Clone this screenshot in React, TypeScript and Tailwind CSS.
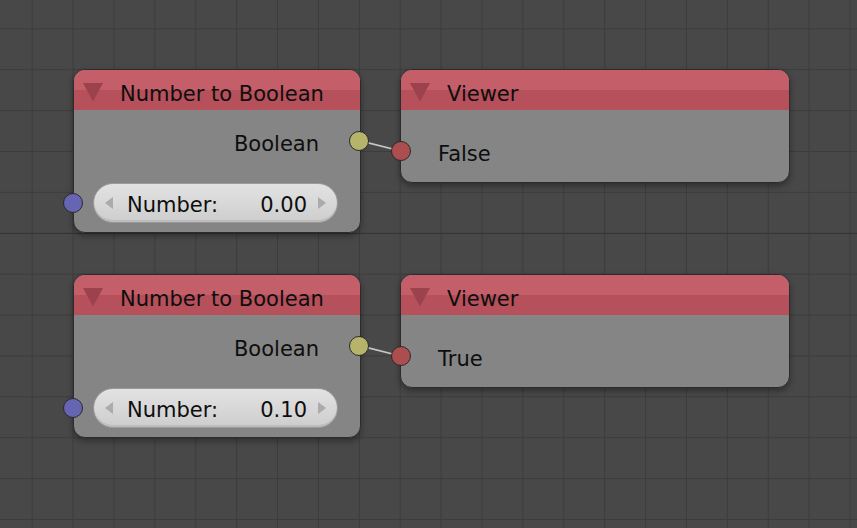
/**
 * Node editor canvas -- two "Number to Boolean" nodes wired to Viewer nodes.
 */

const FONT = "font-['DejaVu_Sans','Liberation_Sans',sans-serif]";

function Collapse() {
  return (
    <svg width="20" height="19" viewBox="0 0 20 19" className="mt-[1px] shrink-0">
      <polygon points="0,0 20,0 10,18.5" fill="#9c424d" />
    </svg>
  );
}

function Socket({ className }: { className: string }) {
  return (
    <div
      className={`absolute z-20 h-[20px] w-[20px] rounded-full border border-[#2a2a2a] ${className}`}
    />
  );
}

function Header({ title }: { title: string }) {
  return (
    <div className="flex h-[40px] items-start gap-[17px] rounded-t-[11px] bg-[linear-gradient(to_bottom,#c45e69_0%,#c45e69_50%,#b6505b_50%,#b6505b_100%)] pl-[9px] pt-[12px]">
      <Collapse />
      <span className="text-[21px] leading-[24px] text-[#0e0e0e]">{title}</span>
    </div>
  );
}

function NumberToBoolean({ value }: { value: string }) {
  return (
    <div className="relative h-[164px] w-[288px] shrink-0 rounded-[12px] border border-[#2c2c2c] bg-[#858585] shadow-[0_3px_6px_rgba(0,0,0,0.35)]">
      <Header title="Number to Boolean" />
      <div className="pr-[41px] pt-[22px] text-right text-[21px] leading-[24px] text-[#0e0e0e]">
        Boolean
      </div>
      <div className="ml-[19px] mt-[27px] flex h-[40px] w-[245px] items-center rounded-full border border-[#9a9a9a] bg-[linear-gradient(to_bottom,#e2e2e2,#d6d6d6_60%,#cdcdcd)] px-[11px] shadow-[inset_0_-2px_0_rgba(0,0,0,0.08)]">
        <svg width="8" height="12" viewBox="0 0 8 12" className="shrink-0">
          <polygon points="8,0 8,12 0,6" fill="#ababab" />
        </svg>
        <span className="ml-[14px] mt-[4px] text-[21px] leading-[24px] text-[#0e0e0e]">Number:</span>
        <span className="ml-auto mt-[4px] text-[21px] leading-[24px] text-[#0e0e0e]">{value}</span>
        <svg width="8" height="12" viewBox="0 0 8 12" className="ml-[11px] shrink-0">
          <polygon points="0,0 0,12 8,6" fill="#ababab" />
        </svg>
      </div>
      <Socket className="left-[275px] top-[61px] bg-[#b6b46b]" />
      <Socket className="left-[-11px] top-[123px] bg-[#6565b3]" />
    </div>
  );
}

function Viewer({ text }: { text: string }) {
  return (
    <div className="relative h-[114px] w-[390px] shrink-0 rounded-[12px] border border-[#2c2c2c] bg-[#858585] shadow-[0_3px_6px_rgba(0,0,0,0.35)]">
      <Header title="Viewer" />
      <div className="pl-[37px] pt-[32px] text-[21px] leading-[24px] text-[#0e0e0e]">{text}</div>
      <Socket className="left-[-10px] top-[71px] bg-[#ac4d4f]" />
    </div>
  );
}

function Row({ value, result }: { value: string; result: string }) {
  return (
    <div className="relative flex items-start gap-[39px]">
      <NumberToBoolean value={value} />
      <Viewer text={result} />
      <svg className="pointer-events-none absolute left-0 top-0 z-10" width="340" height="100">
        <line x1="286.3" y1="71.7" x2="327.7" y2="82" stroke="#c6c6c6" strokeWidth="1.8" />
      </svg>
    </div>
  );
}

export default function App() {
  return (
    <div
      className={`${FONT} h-[528px] w-[857px] overflow-hidden bg-[#484848] bg-[linear-gradient(to_bottom,transparent_233px,#343434_233px,#343434_234px,transparent_234px),linear-gradient(to_right,#3c3c3c_1px,transparent_1px),linear-gradient(to_bottom,#3c3c3c_1px,transparent_1px)] bg-[size:100%_100%,40.9px_40.9px,40.9px_40.9px] bg-[position:0_0,31.7px_28.3px,31.7px_28.3px]`}
    >
      <div className="flex flex-col gap-[41px] pl-[73px] pt-[69px]">
        <Row value="0.00" result="False" />
        <Row value="0.10" result="True" />
      </div>
    </div>
  );
}
